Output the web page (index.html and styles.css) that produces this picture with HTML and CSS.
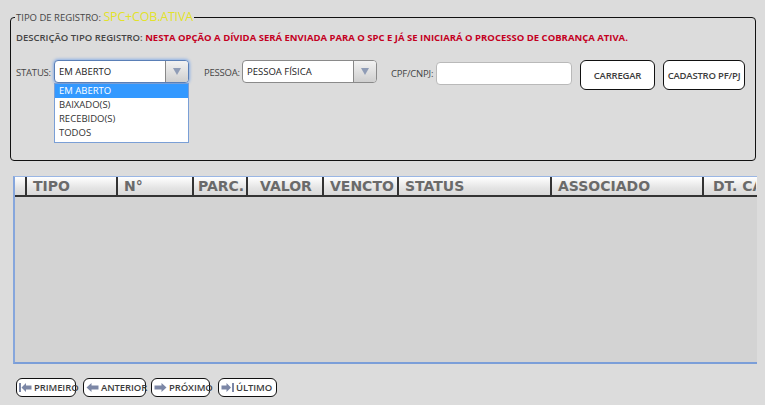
FILE: index.html
```html
<!DOCTYPE html>
<html lang="pt-BR">
<head>
    <meta charset="UTF-8">
    <title>Registros SPC</title>
    <link rel="stylesheet" href="styles.css">
</head>
<body>
    <fieldset class="filtro">
        <legend>TIPO DE REGISTRO: <span class="tipo">SPC+COB.ATIVA</span></legend>
        <p class="desc">DESCRIÇÃO TIPO REGISTRO: <span>NESTA OPÇÃO A DÍVIDA SERÁ ENVIADA PARA O SPC E JÁ SE INICIARÁ O PROCESSO DE COBRANÇA ATIVA.</span></p>
        <div class="linha">
            <label class="lbl">STATUS:</label>
            <div class="sel foco">
                <span class="sel-txt">EM ABERTO</span>
                <span class="sel-btn"><i></i></span>
                <ul class="lista">
                    <li class="ativo">EM ABERTO</li>
                    <li>BAIXADO(S)</li>
                    <li>RECEBIDO(S)</li>
                    <li>TODOS</li>
                </ul>
            </div>
            <label class="lbl lbl-pessoa">PESSOA:</label>
            <div class="sel">
                <span class="sel-txt">PESSOA FÍSICA</span>
                <span class="sel-btn"><i></i></span>
            </div>
            <label class="lbl lbl-cpf">CPF/CNPJ:</label>
            <input type="text" class="cpf">
            <button class="btn btn-carregar">CARREGAR</button>
            <button class="btn btn-cadastro">CADASTRO PF/PJ</button>
        </div>
    </fieldset>

    <div class="grid">
        <div class="grid-head">
            <div class="col c0"></div>
            <div class="col c1">TIPO</div>
            <div class="col c2">N°</div>
            <div class="col c3">PARC.</div>
            <div class="col c4">VALOR</div>
            <div class="col c5">VENCTO</div>
            <div class="col c6">STATUS</div>
            <div class="col c7">ASSOCIADO</div>
            <div class="col c8">DT. CA</div>
        </div>
        <div class="grid-body"></div>
    </div>

    <div class="nav">
        <button class="nbtn b1">
            <svg width="13" height="11" viewBox="0 0 13 11"><rect x="0" y="1" width="2" height="9" fill="#7c87a6"/><path d="M2.5 5.5 L7 1 V3.5 H12.5 V7.5 H7 V10 Z" fill="#7c87a6"/></svg>
            PRIMEIRO
        </button>
        <button class="nbtn b2">
            <svg width="13" height="11" viewBox="0 0 13 11"><path d="M0.5 5.5 L5.5 1 V3.5 H12.5 V7.5 H5.5 V10 Z" fill="#7c87a6"/></svg>
            ANTERIOR
        </button>
        <button class="nbtn b3">
            <svg width="13" height="11" viewBox="0 0 13 11"><path d="M12.5 5.5 L7.5 1 V3.5 H0.5 V7.5 H7.5 V10 Z" fill="#7c87a6"/></svg>
            PRÓXIMO
        </button>
        <button class="nbtn b4">
            <svg width="13" height="11" viewBox="0 0 13 11"><path d="M10 5.5 L5.5 1 V3.5 H0.5 V7.5 H5.5 V10 Z" fill="#7c87a6"/><rect x="11" y="1" width="2" height="9" fill="#7c87a6"/></svg>
            ÚLTIMO
        </button>
    </div>
</body>
</html>
```

FILE: styles.css
```css
body,p,ul,li,fieldset,legend,input,button {
    margin: 0;
    padding: 0;
}
body{
    background: #dcdcdc;
    font-family: "Open Sans", "Noto Sans", sans-serif;
    color: #454545;
    width: 765px;
    height: 405px;
    overflow: hidden;
}
.filtro{
    margin: 10px 9px 0 10px;
    height: 151px;
    border: 1px solid #111;
    border-radius: 4px;
    padding: 0 5px;
    box-sizing: border-box;
}
.filtro legend{
    font-size: 9.5px;
    padding: 0 1px;
    margin-left: -1px;
    line-height: 14px;
}
.filtro legend .tipo{
    color: #e2e22a;
    font-size: 12.5px;
    letter-spacing: -0.2px;
}
.desc{
    font-size: 9.5px;
    font-weight: 600;
    margin-top: 6px;
    line-height: 14px;
}
.desc span{
    color: #c4001f;
    font-weight: 700;
}
.linha{
    display: flex;
    align-items: flex-start;
    margin-top: 15px;
}
.lbl{
    font-size: 9.5px;
    letter-spacing: -0.2px;
    line-height: 14px;
    margin-top: 6px;
    width: 38px;
    white-space: nowrap;
}
.lbl-pessoa{
    margin-left: 15px;
}
.lbl-cpf{
    width: 45px;
    margin-left: 14px;
    margin-top: 7px;
}
.sel{
    position: relative;
    width: 135px;
    height: 23px;
    background: #fff;
    border: 1px solid #8a8a8a;
    border-radius: 4px;
    box-sizing: border-box;
    display: flex;
}
.sel.foco{
    border-color: #5a7fb6;
    box-shadow: 0 0 3px 1px #8cb0e6;
}
.sel-txt{
    flex: 1;
    font-size: 9.5px;
    line-height: 21px;
    padding-left: 4px;
    color: #222;
}
.sel-btn{
    width: 22px;
    border-left: 1px solid #888;
    border-radius: 0 3px 3px 0;
    background: linear-gradient(#f2f2f2, #cfcfcf);
    display: flex;
    align-items: center;
    justify-content: center;
}
.sel-btn i{
    width: 0;
    height: 0;
    border-left: 4px solid transparent;
    border-right: 4px solid transparent;
    border-top: 7px solid #8f9cb6;
}
.lista{
    position: absolute;
    left: -1px;
    top: 22px;
    width: 135px;
    list-style: none;
    background: #fff;
    border: 1px solid #7a9fd6;
    box-sizing: border-box;
    padding-bottom: 2px;
    z-index: 5;
}
.lista li{
    font-size: 9.5px;
    line-height: 14px;
    padding-left: 4px;
    color: #333;
}
.lista li.ativo{
    background: #3399ff;
    color: #fff;
}
.cpf{
    width: 136px;
    height: 23px;
    margin-top: 2px;
    border: 1px solid #b9b9b9;
    border-radius: 4px;
    background: #fff;
    box-sizing: border-box;
}
.btn{
    height: 30px;
    background: #fff;
    border: 1px solid #111;
    border-radius: 6px;
    font-family: "Open Sans", "Noto Sans", sans-serif;
    font-size: 9.5px;
    font-weight: 600;
    letter-spacing: -0.2px;
    color: #3c3c3c;
    padding: 0;
}
.btn-carregar{
    width: 75px;
    margin-left: 8px;
}
.btn-cadastro{
    width: 82px;
    margin-left: 8px;
}
.grid{
    margin: 15px 0 0 13px;
    width: 744px;
    height: 188px;
    background: #d3d3d3;
    border-left: 2px solid #86a6dc;
    border-top: 1px solid #9ab6e4;
    border-bottom: 2px solid #7b9ed8;
    box-sizing: border-box;
    overflow: hidden;
}
.grid-head{
    display: flex;
    height: 20px;
    background: linear-gradient(#ffffff, #e4e4e4 60%, #d9d9d9);
    border-bottom: 2px solid #333;
    box-sizing: border-box;
    white-space: nowrap;
    overflow: hidden;
}
.grid-head .col{
    font-family: "DejaVu Sans", Verdana, sans-serif;
    font-weight: 700;
    font-size: 14px;
    color: #6a6a6a;
    line-height: 18px;
    padding-left: 6px;
    border-right: 2px solid #333;
    box-sizing: border-box;
    flex: none;
    overflow: hidden;
}
.grid-head .c0{ width: 12px; padding: 0; }
.grid-head .c1{ width: 91px; }
.grid-head .c2{ width: 76px; }
.grid-head .c3{ width: 54px; padding-left: 4px; }
.grid-head .c4{ width: 76px; padding-left: 12px; }
.grid-head .c5{ width: 75px; padding-left: 6px; }
.grid-head .c6{ width: 153px; }
.grid-head .c7{ width: 152px; }
.grid-head .c8{ width: 52px; padding-left: 9px; border-right: 0; }
.nav{
    display: flex;
    margin: 14px 0 0 16px;
}
.nbtn{
    height: 19px;
    display: flex;
    align-items: center;
    gap: 2px;
    padding: 0 0 0 2px;
    background: #fff;
    border: 1px solid #111;
    border-radius: 6px;
    font-family: "Open Sans", "Noto Sans", sans-serif;
    font-size: 9.5px;
    font-weight: 600;
    letter-spacing: -0.1px;
    color: #3c3c3c;
    white-space: nowrap;
    overflow: visible;
}
.nbtn svg{
    flex: none;
}
.nbtn.b1{ width: 60px; }
.nbtn.b2{ width: 63px; margin-left: 7px; }
.nbtn.b3{ width: 59px; margin-left: 5px; }
.nbtn.b4{ width: 59px; margin-left: 8px; }
```
